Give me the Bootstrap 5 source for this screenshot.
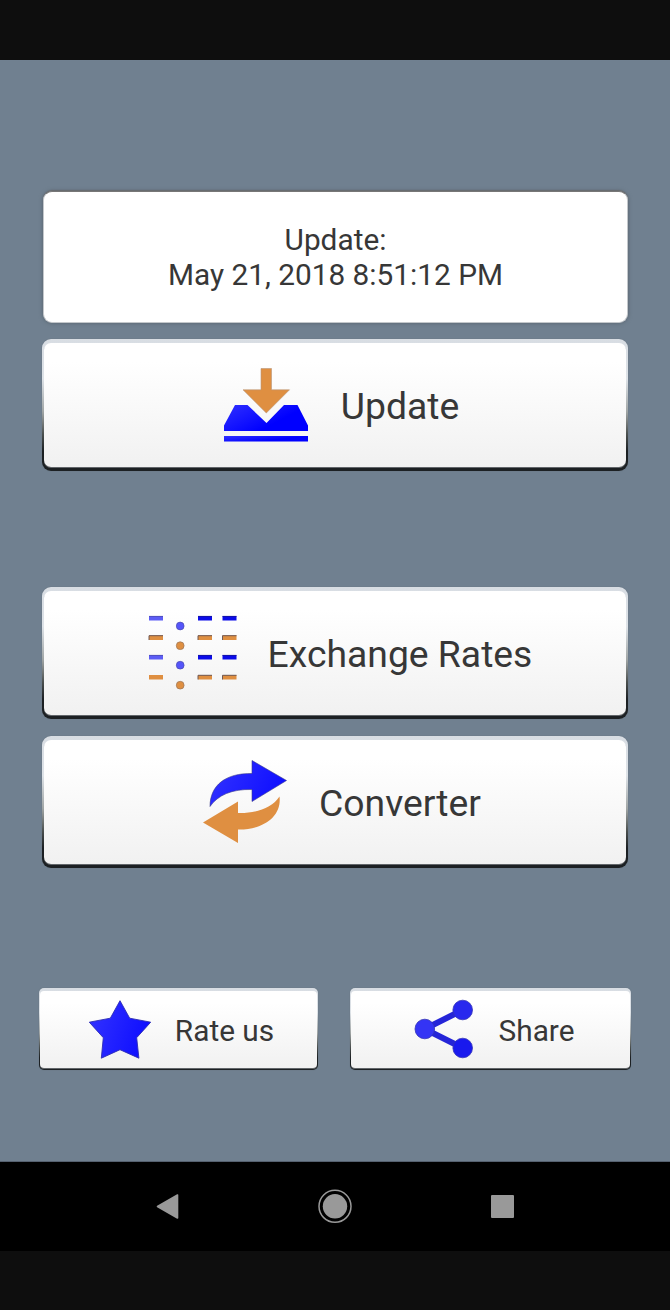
<!DOCTYPE html>
<html lang="en">
<head>
<meta charset="utf-8">
<meta name="viewport" content="width=device-width, initial-scale=1">
<title>Exchange Rates</title>
<link href="https://cdn.jsdelivr.net/npm/bootstrap@5.3.0/dist/css/bootstrap.min.css" rel="stylesheet">
<style>
body{font-family:Roboto,sans-serif;color:#373737;background:#0e0e0e}
.phone{height:1310px;overflow:hidden}
.bar-top{height:60px;background:#0e0e0e}
.screen{height:1102px;background:#708090;padding:131px 42px 0;border-bottom:1px solid #566170}
.info{height:132px;margin:0 0 0 1px;width:585px;border-radius:9px;font-size:29.8px;line-height:35px;background:#fff;border:1px solid #c3c7cb;border-top:1px solid #777;box-shadow:0 0 4px #56626e,0 -1px 1px #77736f}
.key{display:block;width:586px;height:132px;padding:4px 2px 4px;border:0;border-radius:9px;background:linear-gradient(#d8dde3 0,#dde2e7 30%,#a0a5a5 55%,#4b504f 72%,#1c2023 85%,#1c2023);color:#373737;text-align:left;box-shadow:0 0 1px #59636d}
.key-update{margin-top:16px}
.key-rates{margin-top:116px}
.key-converter{margin-top:17px}
.face{height:100%;border-radius:7px;background:linear-gradient(#fff 15%,#f1f1f1);box-shadow:0 1px 0 #62666a;gap:16px;font-size:37.3px;line-height:1}
.key svg{width:114px;height:108px;flex:none}
.keys-small{margin:120px -3px 0}
.keys-small .key{width:279px;height:82px;padding:3px 1px 2px;border-radius:5px}
.keys-small .key+.key{width:281px}
.keys-small .face{font-size:29.8px;border-radius:4px}
.keys-small svg{width:76px;height:72px}
.t{position:relative;top:2px}
.keys-small .t{top:1.500px}
.bar-nav{height:89px;background:#000}
.bar-nav svg{width:670px;height:89px}
</style>
</head>
<body>
<div class="phone d-flex flex-column">
<header class="bar-top flex-shrink-0"></header>
<main class="screen flex-shrink-0">
  <div class="info d-flex align-items-center justify-content-center text-center"><div>Update:<br>May 21, 2018 8:51:12 PM</div></div>

  <button class="key key-update"><span class="face d-flex align-items-center justify-content-center">
    <svg viewBox="211 351 114 108"><defs><linearGradient id="blue" x1="0" y1="0" x2="1" y2=".6"><stop stop-color="#3030ff"/><stop offset=".75" stop-color="#0000ff"/></linearGradient>
      <linearGradient id="soft" x1="0" y1="0" x2="1" y2=".3"><stop stop-color="#3434ff"/><stop offset="1" stop-color="#1010ff"/></linearGradient></defs>
      <path d="M261 368.500h10.500v21.300h18L266.300 413 243 389.800h18z" fill="#df8f41" stroke="#b89578" stroke-width=".6"/>
      <path d="M235 405h12.500l19 18 17.500-18h13.500L308 425.500v5.500h-84v-5.500z" fill="url(#blue)"/>
      <path d="M224 436h84v5.500h-84z" fill="url(#blue)"/></svg>
    <span class="t">Update</span></span></button>

  <button class="key key-rates"><span class="face d-flex align-items-center justify-content-center">
    <svg viewBox="138 599 114 108">
      <path d="M149 616h14v4.500h-14zM149 655h14v4.500h-14z" fill="#5c5cf5"/>
      <path d="M198 616h14v4.500h-14zM222.500 616h14v4.500h-14zM198 655h14v4.500h-14zM222.500 655h14v4.500h-14z" fill="#0b0be8"/>
      <path d="M149 635.300h14v4.700h-14zM198 635.300h14v4.700h-14zM222.500 635.300h14v4.700h-14zM149 675h14v4.500h-14zM198 675h14v4.500h-14zM222.500 675h14v4.500h-14z" fill="#df8f41"/>
      <path d="M149 640v-4.300h14M198 640v-4.300h14M222.500 640v-4.300h14M198 679.500v-4.200h14M222.500 679.500v-4.200h14" fill="none" stroke="#705b58" stroke-width="1"/>
      <path d="M149 616.400h14M149 655.400h14" stroke="#4d4dae" stroke-width=".8"/>
      <path d="M198 616.400h14M222.500 616.400h14M198 655.400h14M222.500 655.400h14" stroke="#151594" stroke-width=".8"/>
      <g stroke-width=".7"><g fill="#5555fa" stroke="#4c4cae"><circle cx="180.200" cy="626" r="3.900"/><circle cx="180.200" cy="665.200" r="3.900"/></g>
      <g fill="#df8f41" stroke="#99765a"><circle cx="180.200" cy="645.700" r="3.900"/><circle cx="180.200" cy="685.200" r="3.900"/></g></g></svg>
    <span class="t">Exchange Rates</span></span></button>

  <button class="key key-converter"><span class="face d-flex align-items-center justify-content-center">
    <svg viewBox="189 748 114 108">
      <path d="M210 806.500C210 785 226 773 252 773.500V760.500L286.500 780.500 252 801.500V789.500C232 789 218 795 210 806.500z" fill="url(#soft)" stroke="#3a3a88" stroke-width=".6"/>
      <path d="M279.500 796.500C272 808 256 813.500 238 813V801.500L203 822.500 238 843V829.500C264 830 282 816 279.500 796.500z" fill="#df8f41"/></svg>
    <span class="t">Converter</span></span></button>

  <div class="keys-small d-flex justify-content-between">
    <button class="key"><span class="face d-flex align-items-center justify-content-center">
      <svg viewBox="82.700 994.300 76 72"><path d="M119.700 1001l9.700 17.500 21 4-14 15.500 2.200 20.500-18.900-8.500-18.700 8.500 2-20.500-14-15.500 21-4z" fill="url(#soft)" stroke="#2b2bb4" stroke-width=".9"/></svg>
      <span class="t">Rate us</span></span></button>
    <button class="key"><span class="face d-flex align-items-center justify-content-center">
      <svg viewBox="407 994 76 72"><path d="M462.700 1010l-38 19 38 19" fill="none" stroke="#2525d8" stroke-width="6"/><g stroke="#3434b8" stroke-width=".8"><circle cx="424.800" cy="1029" r="9.800" fill="#3434f5"/><circle cx="462.700" cy="1010" r="9.800" fill="#2828ee"/><circle cx="462.700" cy="1048" r="9.800" fill="#1919ee"/></g></svg>
      <span class="t">Share</span></span></button>
  </div>
</main>
<nav class="bar-nav flex-shrink-0"><svg class="d-block" viewBox="0 1162 670 89" fill="#999">
  <path d="M157.500 1206.500L177.500 1195v23z" stroke="#999" stroke-width="1.600" stroke-linejoin="round"/>
  <circle cx="335" cy="1206.300" r="12.200"/><circle cx="335" cy="1206.300" r="16" fill="none" stroke="#999" stroke-width="1.500"/>
  <rect x="491" y="1195" width="23" height="23" rx="1"/></svg></nav>
</div>
<script src="https://cdn.jsdelivr.net/npm/bootstrap@5.3.0/dist/js/bootstrap.bundle.min.js"></script>
</body>
</html>
